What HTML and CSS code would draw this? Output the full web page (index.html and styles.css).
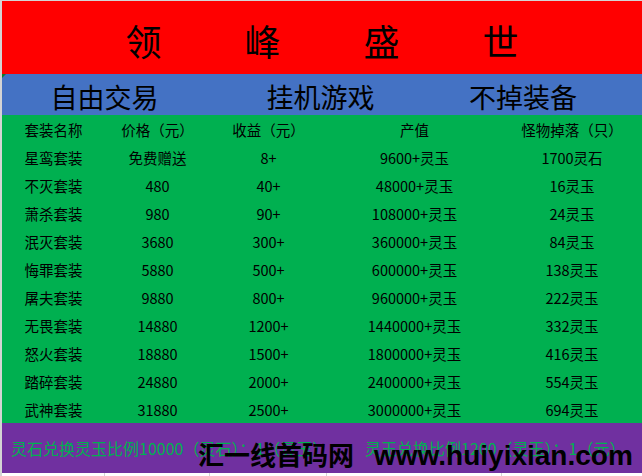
FILE: index.html
```html
<!DOCTYPE html>
<html lang="zh-CN">
<head>
<meta charset="utf-8">
<title>领峰盛世</title>
<link rel="stylesheet" href="styles.css">
</head>
<body>
<div class="sheet">
  <div class="title"><span>领</span><span>峰</span><span>盛</span><span>世</span></div>
  <div class="features">
    <div>自由交易</div><div>挂机游戏</div><div>不掉装备</div><div></div>
    <i class="flag"></i>
  </div>
  <div class="table">
    <div class="row"><div>套装名称</div><div>价格（元）</div><div>收益（元）</div><div>产值</div><div>怪物掉落（只）</div></div>
    <div class="row"><div>星鸾套装</div><div>免费赠送</div><div>8+</div><div>9600+灵玉</div><div>1700灵石</div></div>
    <div class="row"><div>不灭套装</div><div>480</div><div>40+</div><div>48000+灵玉</div><div>16灵玉</div></div>
    <div class="row"><div>萧杀套装</div><div>980</div><div>90+</div><div>108000+灵玉</div><div>24灵玉</div></div>
    <div class="row"><div>泯灭套装</div><div>3680</div><div>300+</div><div>360000+灵玉</div><div>84灵玉</div></div>
    <div class="row"><div>悔罪套装</div><div>5880</div><div>500+</div><div>600000+灵玉</div><div>138灵玉</div></div>
    <div class="row"><div>屠夫套装</div><div>9880</div><div>800+</div><div>960000+灵玉</div><div>222灵玉</div></div>
    <div class="row"><div>无畏套装</div><div>14880</div><div>1200+</div><div>1440000+灵玉</div><div>332灵玉</div></div>
    <div class="row"><div>怒火套装</div><div>18880</div><div>1500+</div><div>1800000+灵玉</div><div>416灵玉</div></div>
    <div class="row"><div>踏碎套装</div><div>24880</div><div>2000+</div><div>2400000+灵玉</div><div>554灵玉</div></div>
    <div class="row"><div>武神套装</div><div>31880</div><div>2500+</div><div>3000000+灵玉</div><div>694灵玉</div></div>
  </div>
  <div class="ratio">
    <div class="r1">灵石兑换灵玉比例10000（灵石）：1（灵玉）</div>
    <div class="r2">灵玉兑换比例1200（灵玉）：1（元）</div>
  </div>
  <div class="foot"><div></div><div></div><div></div><div></div><div></div></div>
  <div class="watermark"><span class="wm-cn">汇一线首码网</span><span class="wm-en">www.huiyixian.com</span></div>
</div>
</body>
</html>
```

FILE: styles.css
```css
html, body {
  margin: 0;
  padding: 0;
  background: #ffffff;
}
body {
  font-family: "Noto Sans CJK SC", "Noto Sans", sans-serif;
  color: #000;
}
.sheet {
  position: relative;
  width: 640px;
  border-left: 2px solid #d4d4d4;
  border-top: 1px solid #d4d4d4;
  overflow: hidden;
}
.title {
  height: 73px;
  background: #ff0000;
  display: flex;
  justify-content: center;
  align-items: center;
  gap: 83px;
  font-size: 36px;
  line-height: 1;
  padding-top: 4px;
  box-sizing: border-box;
}
.features {
  position: relative;
  height: 41px;
  background: #4472c4;
  display: grid;
  grid-template-columns: 205px 227px 178px 1fr;
  align-items: center;
  text-align: center;
  font-size: 27px;
  line-height: 1;
  padding-top: 3px;
  box-sizing: border-box;
}
.flag {
  position: absolute;
  left: 0;
  top: 0;
  width: 0;
  height: 0;
  border-top: 4px solid #0d7a2a;
  border-right: 4px solid transparent;
}
.table {
  background: #00b050;
}
.row {
  display: grid;
  grid-template-columns: 103px 105px 117px 175px 140px;
  height: 28px;
  align-items: center;
  text-align: center;
  font-size: 14.5px;
  line-height: 1;
  padding-top: 3px;
  box-sizing: border-box;
}
.ratio {
  height: 50px;
  background: #7030a0;
  display: grid;
  grid-template-columns: 363px 1fr;
  align-items: center;
  color: #00b050;
  font-size: 16px;
  line-height: 1;
  white-space: nowrap;
}
.r1 {
  padding-left: 9px;
}
.foot {
  height: 3px;
  display: grid;
  grid-template-columns: 103px 105px 117px 175px 140px;
}
.foot div {
  border-right: 1px solid #d4d4d4;
}
.foot div:last-child {
  border-right: none;
}
.watermark {
  position: absolute;
  left: 196px;
  top: 440px;
  display: flex;
  align-items: baseline;
  white-space: nowrap;
  color: #000;
  font-weight: 700;
  line-height: 1;
}
.wm-cn {
  font-size: 26px;
  letter-spacing: 0;
}
.wm-en {
  font-family: "Liberation Sans", Arial, sans-serif;
  font-size: 28px;
  margin-left: 20px;
}
```
